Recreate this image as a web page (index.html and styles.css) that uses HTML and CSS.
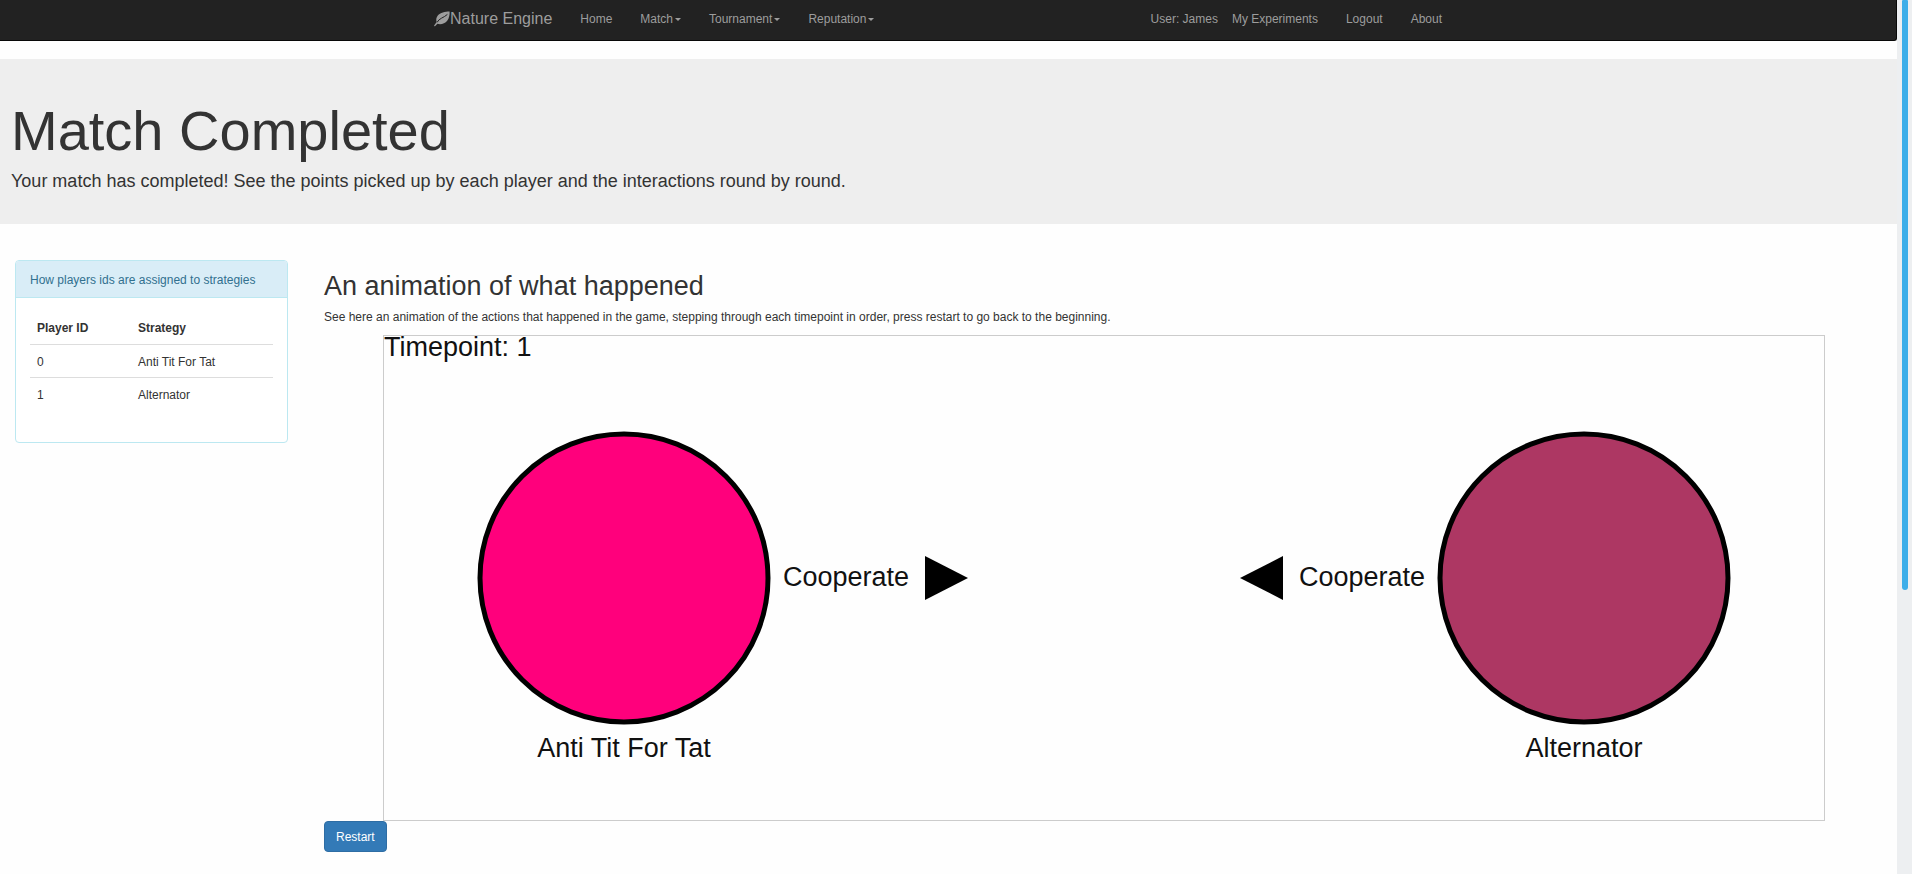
FILE: index.html
```html
<!DOCTYPE html>
<html lang="en">
<head>
<meta charset="utf-8">
<title>Nature Engine - Match Completed</title>
<link rel="stylesheet" href="styles.css">
</head>
<body>
<div class="page">
  <nav class="navbar">
    <div class="navbar-inner">
      <a class="brand" href="#"><svg class="leaf" viewBox="0 0 16 16" aria-hidden="true"><path d="M15.600 .4C11 .4 6.200 1.600 3.800 4.400C2 6.600 2 9 2.600 10.800C2 12 .9 13.400 .1 14.600Q.2 15.600 1 15.200L3.400 12.800C6.500 14 11 12.800 13.200 9.800C15.200 7 15.800 3.600 15.600 .4Z"/><path class="vein" d="M3 11.400C5.400 7 9.500 7 13.400 3.400"/></svg>Nature Engine</a>
      <a href="#">Home</a>
      <a href="#">Match<span class="caret"></span></a>
      <a href="#">Tournament<span class="caret"></span></a>
      <a href="#">Reputation<span class="caret"></span></a>
      <span class="user">User: James</span>
      <a href="#">My Experiments</a>
      <a href="#">Logout</a>
      <a href="#">About</a>
    </div>
  </nav>
  <header class="jumbotron">
    <h1>Match Completed</h1>
    <p>Your match has completed! See the points picked up by each player and the interactions round by round.</p>
  </header>
  <main class="columns">
    <section class="panel">
      <h3 class="panel-heading">How players ids are assigned to strategies</h3>
      <div class="panel-body">
        <table class="players">
          <thead><tr><th>Player ID</th><th>Strategy</th></tr></thead>
          <tbody>
            <tr><td>0</td><td>Anti Tit For Tat</td></tr>
            <tr><td>1</td><td>Alternator</td></tr>
          </tbody>
        </table>
      </div>
    </section>
    <section class="animation">
      <h2>An animation of what happened</h2>
      <p>See here an animation of the actions that happened in the game, stepping through each timepoint in order, press restart to go back to the beginning.</p>
      <div class="stage">
        <svg viewBox="0 0 1440 484">
          <text x="0" y="20">Timepoint: 1</text>
          <circle class="anti" cx="240" cy="242" r="144"/>
          <text x="399" y="250">Cooperate</text>
          <path d="M541 220L584 242L541 264Z"/>
          <text class="name" x="240" y="421">Anti Tit For Tat</text>
          <circle class="alternator" cx="1200" cy="242" r="144"/>
          <text x="915" y="250">Cooperate</text>
          <path d="M899 220L856 242L899 264Z"/>
          <text class="name" x="1200" y="421">Alternator</text>
        </svg>
      </div>
      <button class="restart" type="button">Restart</button>
    </section>
  </main>
</div>
<div class="rail"><div class="thumb"></div></div>
</body>
</html>
```
FILE: styles.css
```css
* { box-sizing: border-box; }
body {
  display: flex;
  height: 100vh;
  margin: 0;
  overflow: hidden;
  background: #fefefe;
  color: #333;
  font: 12px/18px "Liberation Sans", Arial, sans-serif;
}
.page { flex: 1; min-width: 0; }
.rail { width: 15px; padding-left: 5px; background: #edeff1; }
.thumb { width: 6px; height: 590px; border-radius: 1px 1px 3px 3px; background: #3daee9; }
.navbar {
  height: 41px;
  padding: 10px 20px 0 0;
  background: #222;
  border: 1px solid #080808;
  border-width: 0 1px 1px 0;
  border-radius: 0 0 3px 0;
}
.navbar-inner {
  display: flex;
  align-items: center;
  gap: 28px;
  width: 1008px;
  max-width: 100%;
  margin: 0 auto;
  white-space: nowrap;
}
.navbar a, .user { color: #9d9d9d; text-decoration: none; }
.navbar .brand { display: flex; align-items: center; font-size: 16px; }
.leaf { width: 16px; height: 16px; fill: #9d9d9d; }
.vein { fill: none; stroke: #222; stroke-width: 1; }
.caret {
  display: inline-block;
  margin-left: 2px;
  vertical-align: middle;
  border: 3px solid transparent;
  border-top-color: #9d9d9d;
  border-bottom: 0;
}
.user { margin-left: auto; margin-right: -14px; }
.jumbotron { margin: 18px 0 36px; padding: 41px 11px 31px; background: #eee; }
.jumbotron h1 { margin: 0 0 7px; font-size: 56px; line-height: 62px; font-weight: 400; }
.jumbotron p { margin: 0; font-size: 18px; line-height: 24px; }
.columns { display: flex; align-items: flex-start; gap: 36px; padding-left: 15px; }
.panel { width: 273px; border: 1px solid #bce8f1; border-radius: 4px; background: #fff; }
.panel-heading {
  margin: 0;
  padding: 10px 14px 8px;
  border-bottom: 1px solid #bce8f1;
  border-radius: 3px 3px 0 0;
  background: #d9edf7;
  color: #31708f;
  font-size: 12px;
  line-height: 18px;
  font-weight: 400;
}
.panel-body { padding: 14px 14px 32px; }
.players { width: 100%; border-collapse: collapse; font-size: 12px; }
.players th, .players td { padding: 7px; text-align: left; line-height: 18px; }
.players th:first-child { width: 101px; }
.players td { padding: 8px 7px 6px; border-top: 1px solid #ddd; }
.animation { flex: 1; min-width: 0; padding-top: 11px; }
.animation h2 { margin: 0 0 7px; font-size: 27px; line-height: 30px; font-weight: 400; }
.animation p { margin: 0 0 9px; font-size: 12px; }
.stage { margin: 0 72px 0 59px; border: 1px solid #ccc; }
.stage svg { display: block; width: 100%; overflow: visible; font-size: 27px; }
.stage text { fill: #111; }
.stage .name { text-anchor: middle; }
.stage circle { stroke: #000; stroke-width: 5; }
.anti { fill: #ff007c; }
.alternator { fill: #ad3763; }
.restart {
  display: block;
  height: 31px;
  padding: 6px 11px 5px;
  border: 1px solid #2e6da4;
  border-radius: 4px;
  background: #337ab7;
  color: #fff;
  font: 12px/18px "Liberation Sans", Arial, sans-serif;
}
```
